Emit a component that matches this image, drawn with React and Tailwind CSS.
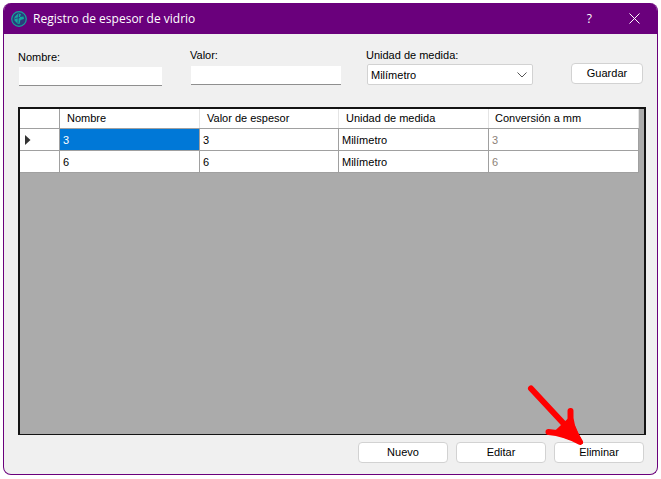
const columns = [
  { label: "Nombre", w: "w-[140px]", pad: "pl-[7px]" },
  { label: "Valor de espesor", w: "w-[139px]", pad: "pl-[7px]" },
  { label: "Unidad de medida", w: "w-[150px]", pad: "pl-[7px]" },
  { label: "Conversión a mm", w: "w-[150px]", pad: "pl-[6px]" },
];

const rows = [
  { nombre: "3", valor: "3", unidad: "Milímetro", mm: "3", selected: true },
  { nombre: "6", valor: "6", unidad: "Milímetro", mm: "6" },
];

const WinButton = ({ label, className }) => (
  <button className={`h-[21px] rounded-[4px] border border-[#d2d2d2] bg-white text-[11px] leading-[17px] pb-[1px] text-black ${className}`}>
    {label}
  </button>
);

const AppIcon = () => (
  <svg width="16" height="16" viewBox="0 0 16 16" className="shrink-0">
    <circle cx="8" cy="8" r="7.3" fill="#2b3a7d" stroke="#17a39b" strokeWidth="1.2" />
    <path d="M7 2.5 L10 3 L9 6 L12.5 5.5 L13 8 L9.5 9 L8.5 13 L6.5 12.5 L3.5 9.5 L3.5 6 Z" fill="#14a89f" />
    <path d="M7.5 3 L7 12 M4 7.5 L9 6.5" stroke="#2b3a7d" strokeWidth="0.8" fill="none" />
  </svg>
);

const RedArrow = () => (
  <svg width="80" height="80" viewBox="0 0 80 80" className="absolute left-[520px] top-[380px] pointer-events-none">
    <g fill="#ff0000" stroke="#ff0000" strokeLinecap="round" strokeLinejoin="round">
      <path d="M11 8.5 L58 59" fill="none" strokeWidth="6" />
      <path d="M50.5 31 Q49 46 60 62 Q44 53 28.5 52" fill="none" strokeWidth="6" />
      <path d="M50 38 L62 63 L34 53 Z" strokeWidth="2" />
    </g>
  </svg>
);

export default function App() {
  return (
    <div className="relative w-[661px] h-[479px] bg-white pt-[3px] pl-[3px] font-['Liberation_Sans',sans-serif]">
      <div className="w-[655px] h-[472px] flex flex-col rounded-lg overflow-hidden border border-[#6a007c] border-t-0 bg-[#f0f0f0]">
        {/* title bar */}
        <div className="h-[31px] shrink-0 bg-[#6a007c] flex items-center pl-[8px] text-white -mx-px">
          <AppIcon />
          <span className="ml-[6px] text-[12px] font-['Open_Sans',sans-serif]">Registro de espesor de vidrio</span>
          <span className="ml-auto text-[12px] font-['Open_Sans',sans-serif] mr-[37px]">?</span>
          <svg width="11" height="11" viewBox="0 0 11 11" className="mr-[18px]">
            <path d="M0.5 0.5 L10.5 10.5 M10.5 0.5 L0.5 10.5" stroke="#fff" strokeWidth="1" />
          </svg>
        </div>

        {/* form */}
        <div className="h-[73px] shrink-0 flex items-start pl-[14px]">
          <div className="w-[172px] pt-[16px]">
            <div className="text-[11px] leading-[14px] text-black mb-[3px]">Nombre:</div>
            <div className="ml-px w-[143px] h-[19px] bg-white border-b border-[#8f8f8f]" />
          </div>
          <div className="w-[176px] pt-[14px]">
            <div className="text-[11px] leading-[14px] text-black mb-[4px]">Valor:</div>
            <div className="ml-px w-[150px] h-[19px] bg-white border-b border-[#8f8f8f]" />
          </div>
          <div className="w-[205px] pt-[14px]">
            <div className="text-[11px] leading-[14px] text-black mb-[2px]">Unidad de medida:</div>
            <div className="ml-px w-[166px] h-[21px] bg-white border border-[#d2d2d2] rounded-[2px] flex items-center pl-[3px] pr-[5px] text-[11px] text-black">
              <span className="pt-px">Milímetro</span>
              <svg width="10" height="6" viewBox="0 0 10 6" className="ml-auto">
                <path d="M0.5 0.5 L5 5 L9.5 0.5" stroke="#555" fill="none" />
              </svg>
            </div>
          </div>
          <WinButton label="Guardar" className="w-[72px] mt-[29px]" />
        </div>

        {/* grid */}
        <div className="ml-[14px] w-[628px] h-[328px] shrink-0 border-2 border-b border-[#141414] bg-[#ababab] flex flex-col">
          <div className="flex w-[619px] h-[20px] shrink-0 bg-white border-b border-[#a0a0a0]">
            <div className="w-[40px] border-r border-[#a0a0a0]" />
            {columns.map((c) => (
              <div key={c.label} className={`${c.w} ${c.pad} border-r border-[#e4e4e4] flex items-center text-[11px] text-black`}>
                {c.label}
              </div>
            ))}
          </div>
          {rows.map((r) => (
            <div key={r.nombre} className="flex w-[619px] h-[22px] shrink-0 bg-white border-b border-[#a0a0a0] text-[11px] text-black">
              <div className="w-[40px] border-r border-[#a0a0a0] flex items-center pl-[5px]">
                {r.selected && (
                  <svg width="6" height="10" viewBox="0 0 6 10">
                    <path d="M0 0 L5.5 5 L0 10 Z" fill="#333" />
                  </svg>
                )}
              </div>
              <div className={`w-[140px] pl-[3px] pt-px border-r border-[#a0a0a0] flex items-center ${r.selected ? "bg-[#0078d7] text-white" : ""}`}>
                {r.nombre}
              </div>
              <div className="w-[139px] pl-[3px] pt-px border-r border-[#a0a0a0] flex items-center">{r.valor}</div>
              <div className="w-[150px] pl-[3px] pt-px border-r border-[#a0a0a0] flex items-center">{r.unidad}</div>
              <div className="w-[150px] pl-[3px] pt-px border-r border-[#a0a0a0] flex items-center text-[#8c7f78]">{r.mm}</div>
            </div>
          ))}
        </div>

        {/* bottom buttons */}
        <div className="flex justify-end gap-[8px] pt-[7px] pr-[13px]">
          <WinButton label="Nuevo" className="w-[90px]" />
          <WinButton label="Editar" className="w-[90px]" />
          <WinButton label="Eliminar" className="w-[90px]" />
        </div>
      </div>
      <RedArrow />
    </div>
  );
}
